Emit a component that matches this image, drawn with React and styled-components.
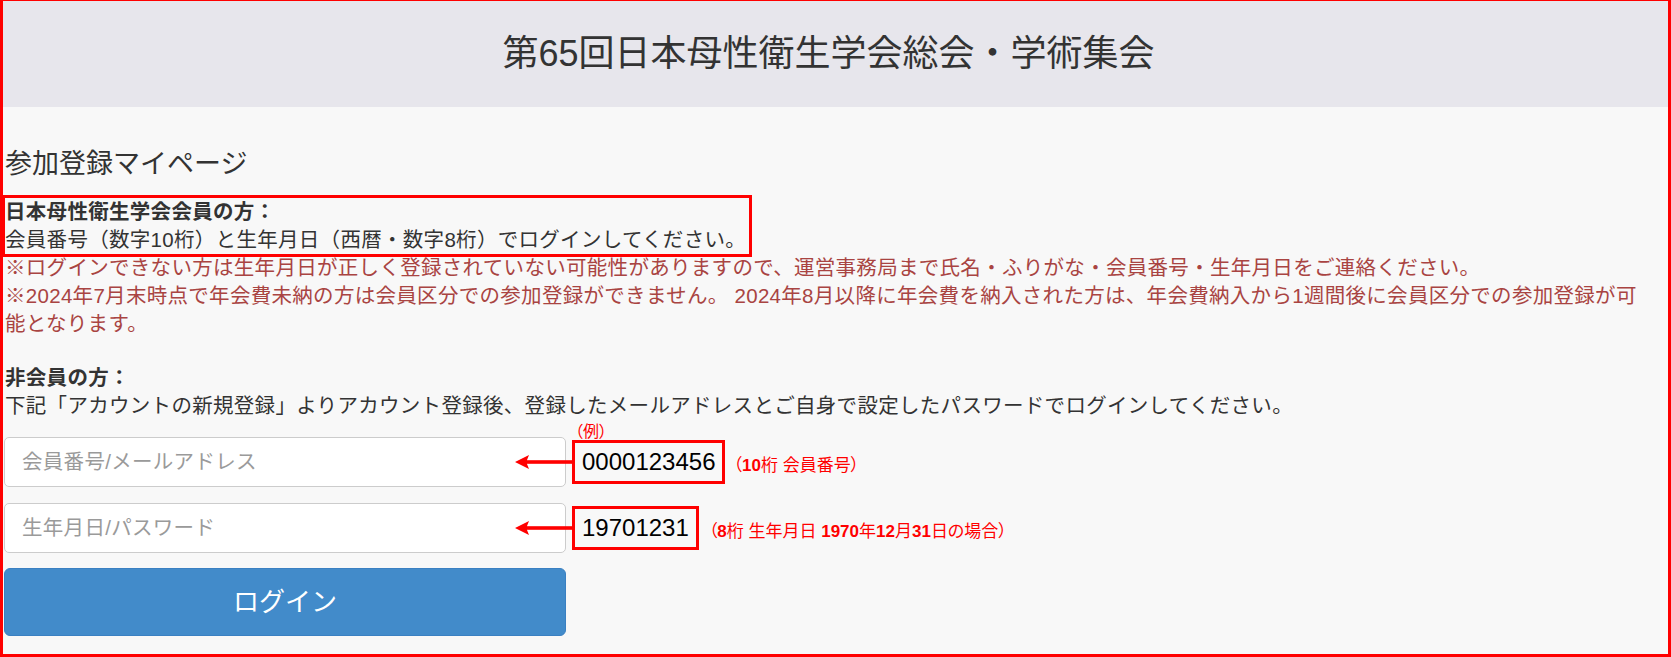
import React from 'react'
import styled, { createGlobalStyle } from 'styled-components'

const GlobalStyle = createGlobalStyle`
  html, body {
    margin: 0;
    padding: 0;
  }
  body {
    font-family: "Liberation Sans", "Noto Sans CJK JP", sans-serif;
    color: #333;
  }
`

const Frame = styled.div`
  box-sizing: border-box;
  height: 657px;
  border: 3px solid #ff0000;
  border-top-width: 1px;
  background: #f8f8f8;
  overflow: hidden;
`

const Header = styled.header`
  height: 106px;
  background: #e7e6ec;
  display: flex;
  align-items: center;
  justify-content: center;
  padding-right: 14px;
`

const SiteTitle = styled.h1`
  margin: 0;
  font-size: 36px;
  font-weight: 400;
  color: #333;
  line-height: 1;
`

const Content = styled.main`
  padding: 0 14px 0 2px;
  font-size: 20.5px;
  line-height: 28px;
  letter-spacing: 0.3px;
`

const PageTitle = styled.h3`
  margin: 42px 0 16px;
  font-size: 27px;
  font-weight: 400;
  line-height: 30px;
  letter-spacing: 0;
`

const MemberBox = styled.div`
  box-sizing: border-box;
  width: 750px;
  margin: 0 0 -3px -3px;
  border: 3px solid #ff0000;
  white-space: nowrap;
`

const Lead = styled.div`
  font-weight: 700;
`

const Warning = styled.p`
  margin: 0;
  color: #a94442;
`

const NonMember = styled.div`
  margin-top: 26px;
`

const Form = styled.form`
  margin: 17px 0 0 -1px;
  width: 562px;
  display: flex;
  flex-direction: column;
  gap: 16px;
  letter-spacing: 0;
`

const FieldRow = styled.div`
  position: relative;
  height: 50px;
`

const Input = styled.input`
  box-sizing: border-box;
  width: 100%;
  height: 50px;
  padding: 0 17px;
  border: 1px solid #ccc;
  border-radius: 5px;
  background: #fff;
  font: inherit;
  font-size: 20.5px;
  letter-spacing: 0.3px;
  color: #555;
  outline: none;
  &::placeholder {
    color: #9a9a9a;
  }
`

const Annotation = styled.div`
  position: absolute;
  top: 0;
  left: 511px;
  height: 50px;
  display: flex;
  align-items: center;
  white-space: nowrap;
`

const ValueBox = styled.div`
  position: relative;
  box-sizing: border-box;
  height: 44px;
  padding: 0 7px;
  border: 3px solid #ff0000;
  background: #f8f8f8;
  font-family: "Liberation Sans", sans-serif;
  font-size: 24px;
  line-height: 38px;
  color: #000;
`

const Example = styled.span`
  position: absolute;
  left: 0;
  bottom: calc(100% + 4px);
  font-family: "Noto Sans CJK JP", sans-serif;
  font-feature-settings: "palt";
  font-size: 16px;
  line-height: 17px;
  color: #ff0000;
`

const Note = styled.span`
  margin: 8px 0 0 ${p => p.$gap}px;
  font-size: 17px;
  line-height: 20px;
  font-feature-settings: "palt";
  color: #ff0000;
`

const Num = styled.b`
  font-weight: 700;
`

const LoginButton = styled.button`
  box-sizing: border-box;
  margin-top: -1px;
  width: 562px;
  height: 68px;
  border: 1px solid #3a80c2;
  border-radius: 6px;
  background: #428bca;
  color: #fff;
  font: inherit;
  font-size: 26px;
  cursor: pointer;
`

const Arrow = () => (
  <svg width="57" height="14" viewBox="0 0 57 14">
    <polygon points="0,7 14,0 12,5 12,9 14,14" fill="#ff0000" />
    <rect x="11" y="5.2" width="46" height="3.6" fill="#ff0000" />
  </svg>
)

export default function App() {
  return (
    <Frame>
      <GlobalStyle />
      <Header>
        <SiteTitle>第65回日本母性衛生学会総会・学術集会</SiteTitle>
      </Header>
      <Content>
        <PageTitle>参加登録マイページ</PageTitle>
        <MemberBox>
          <Lead>日本母性衛生学会会員の方：</Lead>
          <div>会員番号（数字10桁）と生年月日（西暦・数字8桁）でログインしてください。</div>
        </MemberBox>
        <Warning>※ログインできない方は生年月日が正しく登録されていない可能性がありますので、運営事務局まで氏名・ふりがな・会員番号・生年月日をご連絡ください。</Warning>
        <Warning>※2024年7月末時点で年会費未納の方は会員区分での参加登録ができません。 2024年8月以降に年会費を納入された方は、年会費納入から1週間後に会員区分での参加登録が可能となります。</Warning>
        <NonMember>
          <Lead>非会員の方：</Lead>
          <div>下記「アカウントの新規登録」よりアカウント登録後、登録したメールアドレスとご自身で設定したパスワードでログインしてください。</div>
        </NonMember>
        <Form onSubmit={e => e.preventDefault()}>
          <FieldRow>
            <Input type="text" placeholder="会員番号/メールアドレス" />
            <Annotation>
              <Arrow />
              <ValueBox>
                <Example>（例）</Example>
                0000123456
              </ValueBox>
              <Note $gap={8}>（<Num>10</Num>桁 会員番号）</Note>
            </Annotation>
          </FieldRow>
          <FieldRow>
            <Input type="password" placeholder="生年月日/パスワード" />
            <Annotation>
              <Arrow />
              <ValueBox>19701231</ValueBox>
              <Note $gap={10}>（<Num>8</Num>桁 生年月日 <Num>1970</Num>年<Num>12</Num>月<Num>31</Num>日の場合）</Note>
            </Annotation>
          </FieldRow>
          <LoginButton type="submit">ログイン</LoginButton>
        </Form>
      </Content>
    </Frame>
  )
}
